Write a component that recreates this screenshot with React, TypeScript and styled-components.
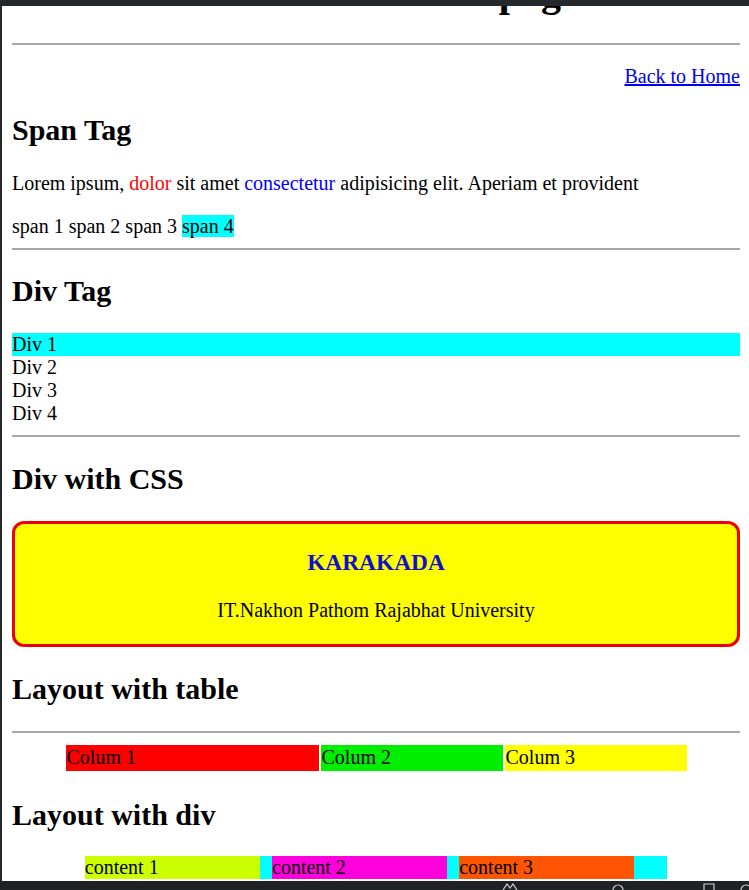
import React from "react";
import styled, { createGlobalStyle } from "styled-components";

const Global = createGlobalStyle`
  html, body { margin: 0; padding: 0; }
  body { background: #202124; font-family: "Liberation Serif", "Times New Roman", serif; }
`;

const Screen = styled.div`
  width: 749px;
  height: 890px;
  display: flex;
  flex-direction: column;
  background: #202124;
  overflow: hidden;
`;

const TopBar = styled.div`
  height: 6px;
  flex: none;
  background: #25282c;
`;

const Middle = styled.div`
  flex: 1;
  min-height: 0;
  display: flex;
`;

const LeftEdge = styled.div`
  width: 2px;
  flex: none;
  background: #25282c;
`;

const Viewport = styled.div`
  flex: 1;
  overflow: hidden;
  background: #ffffff;
  color: #000;
  font-size: 20px;
  line-height: normal;
`;

const Page = styled.div`
  padding: 0 9px 0 10px;
  display: flow-root;
`;

const Title = styled.h1`
  font-size: 40px;
  font-weight: bold;
  text-align: center;
  padding-left: 10px;
  margin: -37px 0 26.8px;
`;

const Rule = styled.hr`
  border: 0;
  height: 0;
  border-top: 2px solid #a6a6a6;
  margin: 10px 0;
`;

const RightPara = styled.p`
  margin: 20px 0;
  text-align: right;
`;

const Link = styled.a`
  color: #0000ee;
  text-decoration: underline;
`;

const SectionTitle = styled.h2`
  font-size: 30px;
  font-weight: bold;
  margin: 24.9px 0;
`;

const Para = styled.p`
  margin: 20px 0;
`;

const Colored = styled.span<{ $color: string }>`
  color: ${(p) => p.$color};
`;

const SpanRow = styled.div``;

const Marked = styled.span<{ $bg?: string }>`
  background: ${(p) => p.$bg || "transparent"};
`;

const Block = styled.div<{ $bg?: string }>`
  background: ${(p) => p.$bg || "transparent"};
`;

const Card = styled.div`
  margin: 24.9px 0;
  padding: 1.5px 0;
  background: #ffff00;
  border: 3px solid #ee0000;
  border-radius: 12px;
  text-align: center;
`;

const CardTitle = styled.h3`
  font-size: 23.4px;
  font-weight: bold;
  color: #1010cc;
  margin: 23.4px 0;
`;

const CardText = styled.p`
  margin: 20px 0;
`;

const Table = styled.table`
  width: 625px;
  margin: 10px auto 0;
  border-spacing: 2px;
  font-size: 20px;
`;

const Cell = styled.td<{ $bg: string; $w: number }>`
  background: ${(p) => p.$bg};
  width: ${(p) => p.$w}px;
  padding: 1px;
  height: 24px;
`;

const DivRow = styled.div`
  width: 80%;
  margin: 0 auto;
  display: flex;
  background: #00ffff;
`;

const DivBox = styled.div<{ $bg: string }>`
  width: 30%;
  margin-right: 12.5px;
  background: ${(p) => p.$bg};
`;

const BottomBar = styled.div`
  height: 9px;
  flex: none;
  background: #202124;
  display: flex;
  align-items: flex-start;
  padding-top: 2px;
  box-sizing: border-box;
`;

const BarIcon = styled.svg<{ $left: number }>`
  margin-left: ${(p) => p.$left}px;
  flex: none;
  display: block;
`;

export default function App() {
  return (
    <Screen>
      <Global />
      <TopBar />
      <Middle>
        <LeftEdge />
        <Viewport>
          <Page>
            <Title>HTML Document page</Title>
            <Rule />
            <RightPara>
              <Link href="#">Back to Home</Link>
            </RightPara>

            <SectionTitle>Span Tag</SectionTitle>
            <Para>
              Lorem ipsum, <Colored $color="#ff0000">dolor</Colored> sit amet{" "}
              <Colored $color="#0000ff">consectetur</Colored> adipisicing elit. Aperiam et provident
            </Para>
            <SpanRow>
              <Marked>span 1</Marked> <Marked>span 2</Marked> <Marked>span 3</Marked>{" "}
              <Marked $bg="#00ffff">span 4</Marked>
            </SpanRow>
            <Rule />

            <SectionTitle>Div Tag</SectionTitle>
            <Block $bg="#00ffff">Div 1</Block>
            <Block>Div 2</Block>
            <Block>Div 3</Block>
            <Block>Div 4</Block>
            <Rule />

            <SectionTitle>Div with CSS</SectionTitle>
            <Card>
              <CardTitle>KARAKADA</CardTitle>
              <CardText>IT.Nakhon Pathom Rajabhat University</CardText>
            </Card>

            <SectionTitle>Layout with table</SectionTitle>
            <Rule />
            <Table>
              <tbody>
                <tr>
                  <Cell $bg="#ff0000" $w={251}>Colum 1</Cell>
                  <Cell $bg="#00ee00" $w={180}>Colum 2</Cell>
                  <Cell $bg="#ffff00" $w={180}>Colum 3</Cell>
                </tr>
              </tbody>
            </Table>

            <SectionTitle>Layout with div</SectionTitle>
            <DivRow>
              <DivBox $bg="#ccff00">content 1</DivBox>
              <DivBox $bg="#ff00dd">content 2</DivBox>
              <DivBox $bg="#ff5500">content 3</DivBox>
            </DivRow>
          </Page>
        </Viewport>
      </Middle>
      <BottomBar>
        <BarIcon $left={502} width="16" height="7" viewBox="0 0 16 7">
          <path d="M1 7 L5 1 L8 5 L11 1 L15 7" fill="none" stroke="#cfcfcf" strokeWidth="1.2" />
        </BarIcon>
        <BarIcon $left={94} width="12" height="7" viewBox="0 0 12 7">
          <path d="M1 7 A5 5 0 0 1 11 7" fill="none" stroke="#cfcfcf" strokeWidth="1.2" />
        </BarIcon>
        <BarIcon $left={76} width="18" height="7" viewBox="0 0 18 7">
          <path d="M4 7 V1 H14 V7" fill="none" stroke="#cfcfcf" strokeWidth="1.2" />
        </BarIcon>
        <BarIcon $left={22} width="12" height="7" viewBox="0 0 12 7">
          <path d="M1 7 A5 5 0 0 1 11 7" fill="none" stroke="#cfcfcf" strokeWidth="1.2" />
        </BarIcon>
      </BottomBar>
    </Screen>
  );
}
